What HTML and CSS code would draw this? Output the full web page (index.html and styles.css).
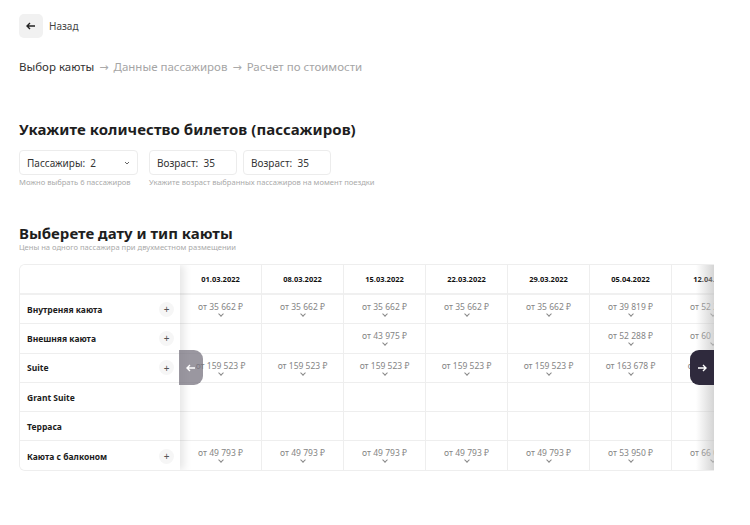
FILE: index.html
```html
<!DOCTYPE html>
<html lang="ru">
<head>
<meta charset="utf-8">
<link rel="stylesheet" href="styles.css">
</head>
<body>
<div class="page">
  <div class="back">
    <span class="back-btn"><svg width="10" height="8" viewBox="0 0 10 8"><path d="M4 1 L1 4 L4 7 M1 4 H9" fill="none" stroke="#222" stroke-width="1.4"/></svg></span>
    <span class="back-text">Назад</span>
  </div>

  <div class="crumbs">
    <span class="crumb active">Выбор каюты</span>
    <span class="arr">→</span>
    <span class="crumb">Данные пассажиров</span>
    <span class="arr">→</span>
    <span class="crumb">Расчет по стоимости</span>
  </div>

  <h2 class="h1">Укажите количество билетов (пассажиров)</h2>
  <div class="fields">
    <div class="field-group">
      <div class="field select">Пассажиры:&nbsp; 2 <svg class="chev" width="6" height="4" viewBox="0 0 6 4"><path d="M1 1 L3 3 L5 1" fill="none" stroke="#666" stroke-width="1"/></svg></div>
      <div class="hint">Можно выбрать 6 пассажиров</div>
    </div>
    <div class="field-group">
      <div class="age-row">
        <div class="field age">Возраст:&nbsp; 35</div>
        <div class="field age">Возраст:&nbsp; 35</div>
      </div>
      <div class="hint">Укажите возраст выбранных пассажиров на момент поездки</div>
    </div>
  </div>

  <h2 class="h2">Выберете дату и тип каюты</h2>
  <div class="sub">Цены на одного пассажира при двухместном размещении</div>

  <div class="table">
    <div class="names">
      <div class="cell head"></div>
      <div class="cell name">Внутреняя каюта<span class="plus">+</span></div>
      <div class="cell name">Внешняя каюта<span class="plus">+</span></div>
      <div class="cell name">Suite<span class="plus">+</span></div>
      <div class="cell name">Grant Suite</div>
      <div class="cell name">Терраса</div>
      <div class="cell name">Каюта с балконом<span class="plus">+</span></div>
    </div>
    <div class="cols">
      <div class="col">
        <div class="cell head">01.03.2022</div>
        <div class="cell price">от 35 662 ₽<i class="dd"></i></div>
        <div class="cell price"></div>
        <div class="cell price">от 159 523 ₽<i class="dd"></i></div>
        <div class="cell price"></div>
        <div class="cell price"></div>
        <div class="cell price">от 49 793 ₽<i class="dd"></i></div>
      </div>
      <div class="col">
        <div class="cell head">08.03.2022</div>
        <div class="cell price">от 35 662 ₽<i class="dd"></i></div>
        <div class="cell price"></div>
        <div class="cell price">от 159 523 ₽<i class="dd"></i></div>
        <div class="cell price"></div>
        <div class="cell price"></div>
        <div class="cell price">от 49 793 ₽<i class="dd"></i></div>
      </div>
      <div class="col">
        <div class="cell head">15.03.2022</div>
        <div class="cell price">от 35 662 ₽<i class="dd"></i></div>
        <div class="cell price">от 43 975 ₽<i class="dd"></i></div>
        <div class="cell price">от 159 523 ₽<i class="dd"></i></div>
        <div class="cell price"></div>
        <div class="cell price"></div>
        <div class="cell price">от 49 793 ₽<i class="dd"></i></div>
      </div>
      <div class="col">
        <div class="cell head">22.03.2022</div>
        <div class="cell price">от 35 662 ₽<i class="dd"></i></div>
        <div class="cell price"></div>
        <div class="cell price">от 159 523 ₽<i class="dd"></i></div>
        <div class="cell price"></div>
        <div class="cell price"></div>
        <div class="cell price">от 49 793 ₽<i class="dd"></i></div>
      </div>
      <div class="col">
        <div class="cell head">29.03.2022</div>
        <div class="cell price">от 35 662 ₽<i class="dd"></i></div>
        <div class="cell price"></div>
        <div class="cell price">от 159 523 ₽<i class="dd"></i></div>
        <div class="cell price"></div>
        <div class="cell price"></div>
        <div class="cell price">от 49 793 ₽<i class="dd"></i></div>
      </div>
      <div class="col">
        <div class="cell head">05.04.2022</div>
        <div class="cell price">от 39 819 ₽<i class="dd"></i></div>
        <div class="cell price">от 52 288 ₽<i class="dd"></i></div>
        <div class="cell price">от 163 678 ₽<i class="dd"></i></div>
        <div class="cell price"></div>
        <div class="cell price"></div>
        <div class="cell price">от 53 950 ₽<i class="dd"></i></div>
      </div>
      <div class="col">
        <div class="cell head">12.04.2022</div>
        <div class="cell price">от 52 288 ₽<i class="dd"></i></div>
        <div class="cell price">от 60 110 ₽<i class="dd"></i></div>
        <div class="cell price">от 163 678 ₽<i class="dd"></i></div>
        <div class="cell price"></div>
        <div class="cell price"></div>
        <div class="cell price">от 66 020 ₽<i class="dd"></i></div>
      </div>
    </div>
    <div class="fade"></div>
    <span class="nav prev"><svg width="10" height="8" viewBox="0 0 10 8"><path d="M4 1 L1 4 L4 7 M1 4 H9" fill="none" stroke="#fff" stroke-width="1.4"/></svg></span>
    <span class="nav next"><svg width="10" height="8" viewBox="0 0 10 8"><path d="M6 1 L9 4 L6 7 M1 4 H9" fill="none" stroke="#fff" stroke-width="1.4"/></svg></span>
  </div>
</div>
</body>
</html>
```

FILE: styles.css
```css
* { box-sizing: border-box; }
html, body { margin: 0; background: #fff; }
body { font-family: "Noto Sans", "DejaVu Sans", sans-serif; color: #222; }
.page { padding: 14px 19px 0 19px; }

.back { display: flex; align-items: center; gap: 6px; height: 24px; }
.back-btn { width: 24px; height: 24px; border-radius: 5px; background: #f1f1f1; display: flex; align-items: center; justify-content: center; }
.back-text { font-size: 10px; color: #444; }

.crumbs { margin-top: 20px; display: flex; align-items: center; gap: 5px; font-size: 11.5px; color: #a5a5a5; height: 16px; }
.crumb.active { color: #333; }
.arr { font-size: 11px; color: #aaa; }

.h1 { margin: 45px 0 0 0; font-size: 15px; font-weight: 700; color: #1e1e1e; line-height: 20px; letter-spacing: 0.05px; }
.fields { display: flex; gap: 11px; margin-top: 11px; }
.field-group { display: flex; flex-direction: column; }
.age-row { display: flex; gap: 6px; }
.field { height: 25px; border: 1px solid #ececec; border-radius: 4px; display: flex; align-items: center; padding: 0 7px; font-size: 10px; color: #333; }
.select { width: 119px; justify-content: space-between; }
.age { width: 88px; }
.hint { font-size: 7.6px; color: #aaa; margin-top: 2px; line-height: 10px; }

.h2 { margin: 36px 0 0 0; font-size: 15px; font-weight: 700; color: #1e1e1e; line-height: 20px; }
.sub { font-size: 7.6px; color: #aaa; line-height: 10px; margin-top: -1px; }

.table { position: relative; margin-top: 12px; width: 695px; height: 207px; border: 1px solid #eee; border-right: none; border-radius: 6px 0 0 6px; overflow: hidden; display: flex; }
.names { width: 160px; flex: none; position: relative; z-index: 2; background: #fff; box-shadow: 4px 0 8px rgba(0,0,0,0.10); }
.cols { display: flex; flex: none; }
.col { width: 82px; flex: none; border-right: 1px solid #eee; }
.cell { height: 29.3px; border-bottom: 1px solid #eee; }
.cell.head { height: 30px; border-bottom-width: 2px; border-bottom-color: #f0f0f0; display: flex; align-items: center; justify-content: center; font-size: 7.5px; font-weight: 700; color: #111; }
.cell:last-child { border-bottom: none; }
.name { display: flex; align-items: center; justify-content: space-between; padding: 0 6px 0 7px; font-size: 8.5px; font-weight: 700; color: #1c1c1c; }
.plus { width: 15px; height: 15px; border-radius: 50%; background: #f6f6f6; display: flex; align-items: center; justify-content: center; font-size: 10px; font-weight: 400; color: #555; line-height: 1; }
.price { display: flex; flex-direction: column; align-items: center; padding-top: 6px; font-size: 8.5px; color: #858585; line-height: 11px; }
.dd { display: block; width: 4px; height: 4px; border-right: 1px solid #888; border-bottom: 1px solid #888; transform: rotate(45deg); }

.fade { position: absolute; right: 0; top: 0; bottom: 0; width: 18px; background: linear-gradient(to right, rgba(255,255,255,0), rgba(190,190,190,0.65)); z-index: 3; }
.nav { position: absolute; top: 85px; width: 24px; height: 35px; display: flex; align-items: center; justify-content: center; z-index: 4; }
.prev { left: 159px; background: rgba(120,116,128,0.75); border-radius: 0 9px 9px 0; }
.next { right: 0; background: #2f2a3d; border-radius: 9px 0 0 9px; }
```
